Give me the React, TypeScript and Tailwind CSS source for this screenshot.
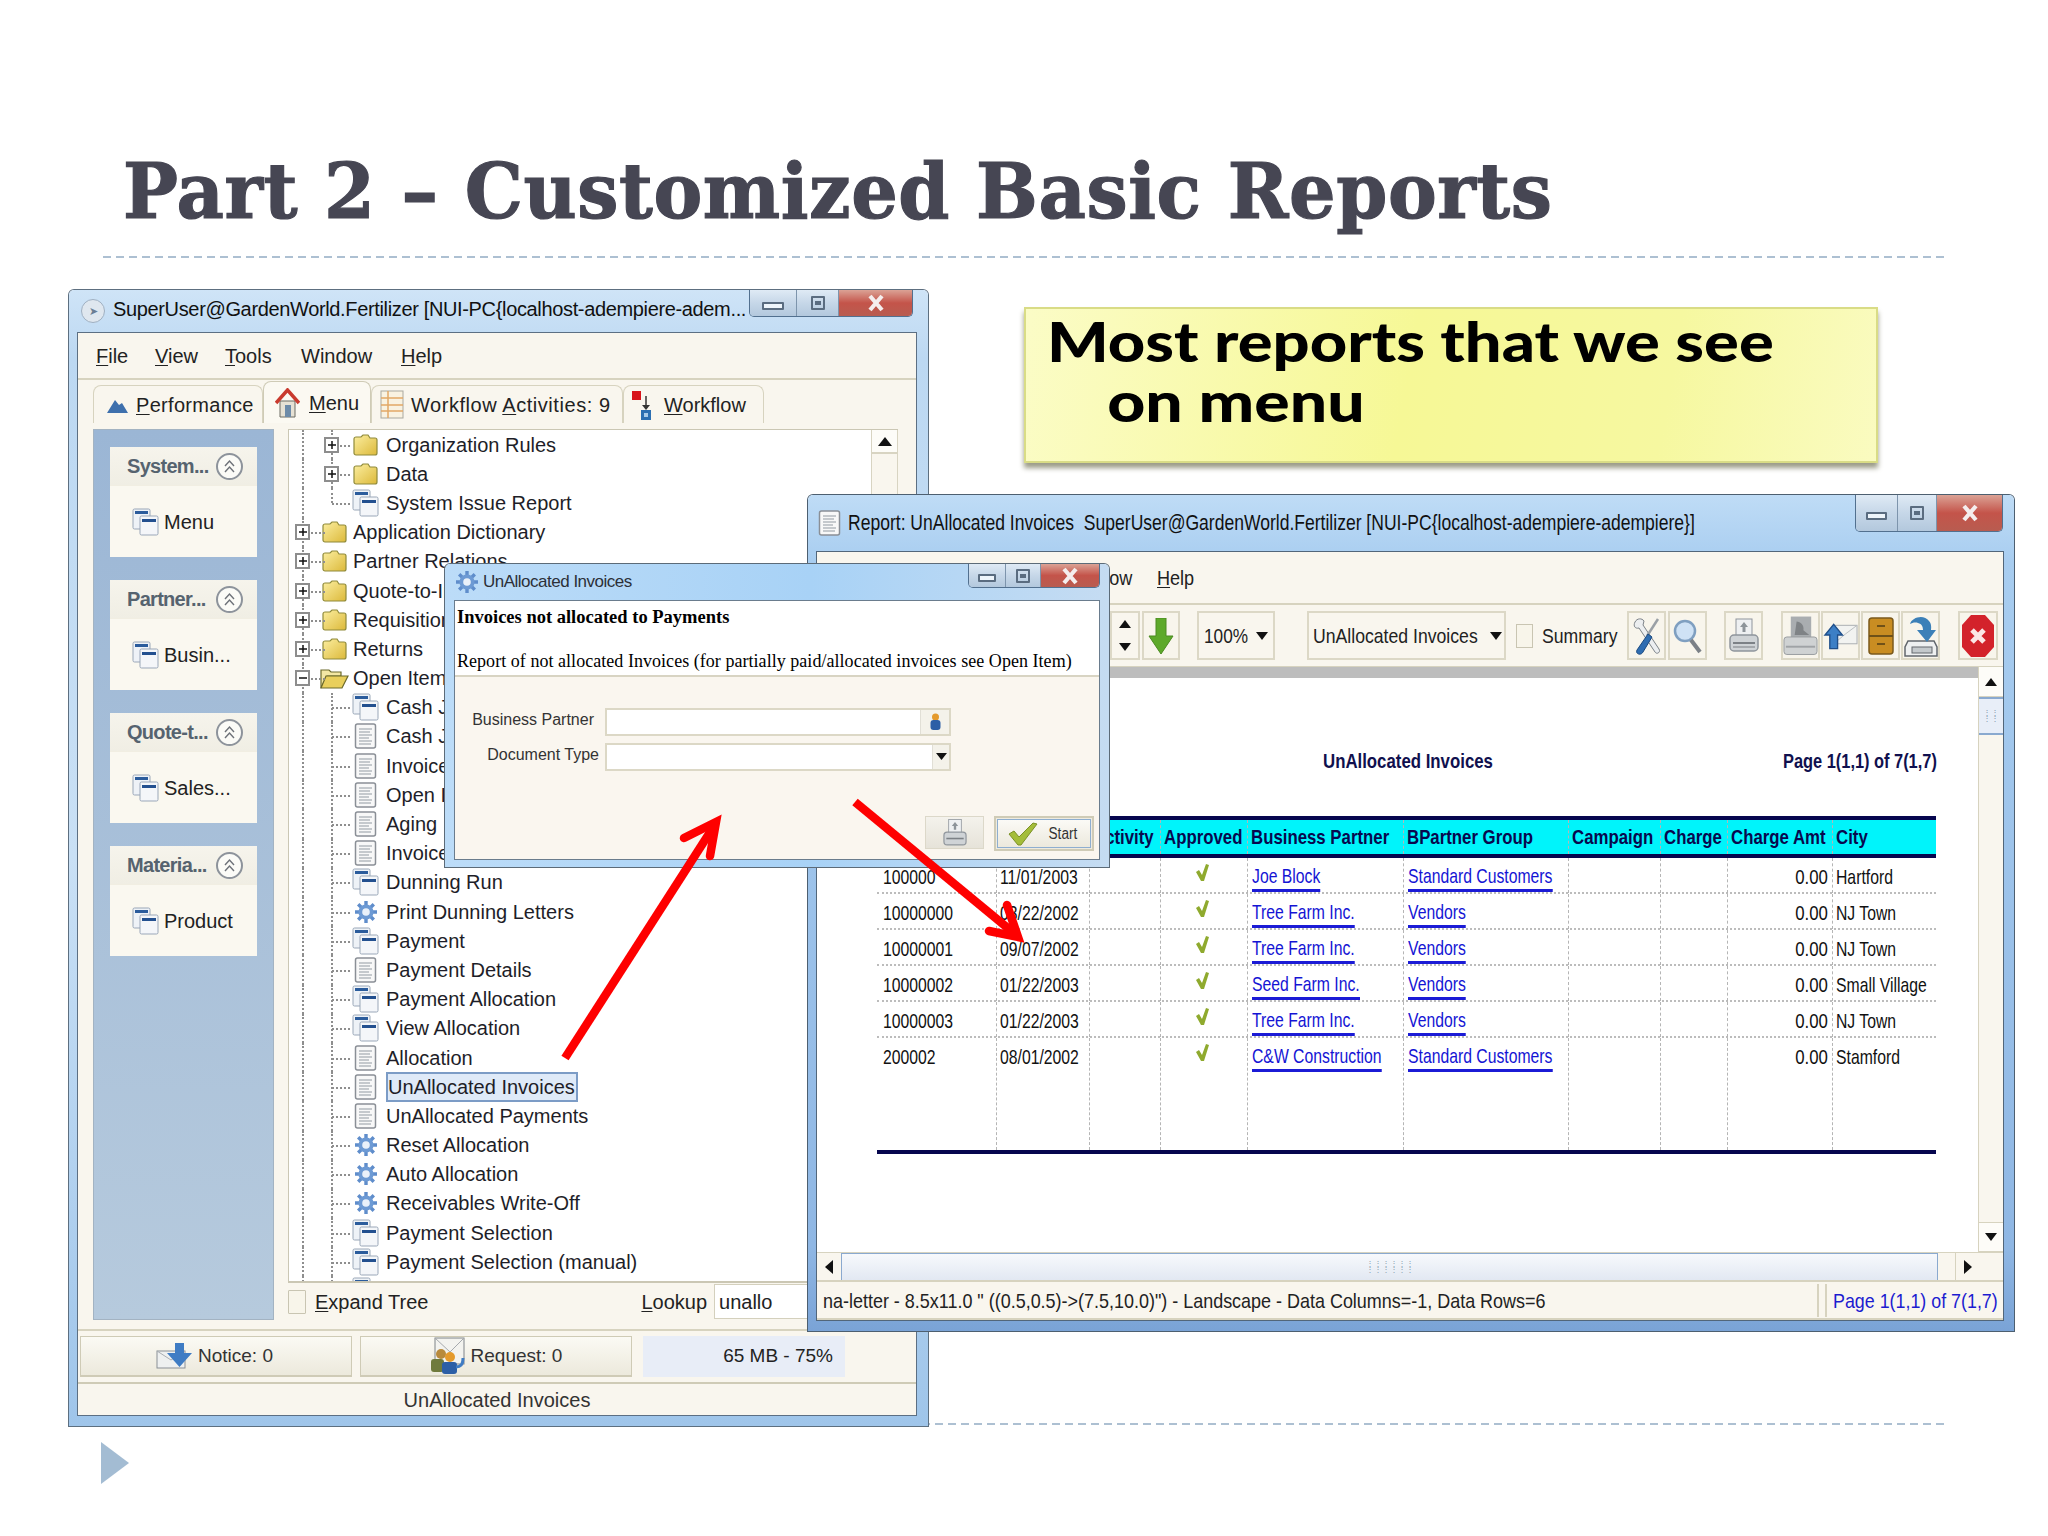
import React from "react";

const WinIcon = () => (
  <svg width="28" height="28" viewBox="0 0 28 28">
    <rect x="1" y="1" width="17" height="20" rx="1.5" fill="#eef2f7" stroke="#9aa7b8" />
    <rect x="3" y="3" width="13" height="3" fill="#2b5c9c" />
    <rect x="8" y="8" width="18" height="19" rx="1.5" fill="#f4f6f9" stroke="#9aa7b8" />
    <rect x="10" y="11" width="14" height="3" fill="#23508f" />
  </svg>
);
const ReportIcon = () => (
  <svg width="24" height="26" viewBox="0 0 24 26">
    <rect x="1.5" y="1" width="20" height="24" rx="2" fill="#f8f8f8" stroke="#8a8f96" strokeWidth="1.5" />
    <path d="M5 6h13M5 9h11M5 12h13M5 15h10M5 18h13M5 21h12" stroke="#b4b9be" strokeWidth="1.5" />
  </svg>
);
const GearIcon = () => (
  <svg width="24" height="24" viewBox="0 0 24 24">
    <g stroke="#5f8dcb" strokeWidth="3.4">
      <path d="M12 1v22M1 12h22M4.2 4.2l15.6 15.6M19.8 4.2L4.2 19.8" />
    </g>
    <circle cx="12" cy="12" r="7.6" fill="#6d9ad4" />
    <circle cx="12" cy="12" r="3.8" fill="#eaf1fa" />
  </svg>
);
const Folder = () => (
  <svg width="25" height="22" viewBox="0 0 25 22">
    <defs>
      <linearGradient id="fy" x1="0" y1="0" x2="1" y2="1">
        <stop offset="0" stopColor="#fbeea0" />
        <stop offset="1" stopColor="#dcb93a" />
      </linearGradient>
    </defs>
    <path d="M1 5a2 2 0 012-2h5l2-2h5l2 3h5a2 2 0 012 2v13a2 2 0 01-2 2H3a2 2 0 01-2-2z" fill="url(#fy)" stroke="#8f8a3a" strokeWidth="1.2" />
  </svg>
);
const OpenFolder = () => (
  <svg width="29" height="24" viewBox="0 0 29 24">
    <path d="M1 4h8l2 2h10v4H7L1 22z" fill="#f3e7a4" stroke="#6c6a2c" strokeWidth="1.2" />
    <path d="M6 10h22l-6 12H1z" fill="#e9cf5c" stroke="#6c6a2c" strokeWidth="1.2" />
  </svg>
);
const TreeBox = ({ open }: { open?: boolean }) => (
  <span className="absolute left-[6px] top-1/2 -mt-[8px] z-10 flex h-[16px] w-[15px] items-center justify-center border-2 border-[#8d8d8d] bg-white">
    <svg width="10" height="10" viewBox="0 0 10 10">
      <path d={open ? "M1 5h8" : "M1 5h8M5 1v8"} stroke="#111" strokeWidth="1.5" />
    </svg>
  </span>
);
const ChevCircle = () => (
  <span className="flex h-[27px] w-[27px] shrink-0 items-center justify-center rounded-full border-2 border-[#8d939b] bg-[#fbfbf7]">
    <svg width="15" height="15" viewBox="0 0 15 15" fill="none" stroke="#6d7178" strokeWidth="1.4">
      <path d="M3 7l4.5-5L12 7M3 13l4.5-5L12 13" />
    </svg>
  </span>
);
const WinButtons = ({ w, h, a, b, c }: { w: string; h: string; a: string; b: string; c: string }) => (
  <div className={`flex shrink-0 ${w} ${h} overflow-hidden rounded-b-[5px] border border-t-0 border-[#52708f]`}>
    <div className={`${a} flex items-center justify-center border-r border-[#7d94ac] bg-[linear-gradient(180deg,#dfeaf5,#c6d7e8_50%,#b3c8dd)]`}>
      <span className="mt-[5px] h-[8px] w-[50%] max-w-[22px] rounded-[1px] border-2 border-[#5a6c80] bg-[#eef5fb]" />
    </div>
    <div className={`${b} flex items-center justify-center border-r border-[#7d94ac] bg-[linear-gradient(180deg,#dfeaf5,#c6d7e8_50%,#b3c8dd)]`}>
      <span className="flex h-[14px] w-[14px] items-center justify-center rounded-[1px] border-2 border-[#5a6c80]">
        <span className="h-[4px] w-[6px] bg-[#5a6c80]" />
      </span>
    </div>
    <div className={`${c} flex items-center justify-center bg-[linear-gradient(180deg,#dba295,#c4544a_50%,#b85c50)]`}>
      <svg width="18" height="18" viewBox="0 0 18 18"><path d="M3 2l12 14M15 2L3 16" stroke="#f4eeee" strokeWidth="4.2" /></svg>
    </div>
  </div>
);
const U = ({ c, r }: { c: string; r: string }) => (
  <span>
    <span className="underline decoration-1 underline-offset-2">{c}</span>
    {r}
  </span>
);

type Row = { t: string; l: 0 | 1; i: "f" | "o" | "w" | "r" | "g"; box?: "p" | "m"; last?: boolean; sel?: boolean };
const rows: Row[] = [
  { t: "Organization Rules", l: 1, i: "f", box: "p" },
  { t: "Data", l: 1, i: "f", box: "p" },
  { t: "System Issue Report", l: 1, i: "w", last: true },
  { t: "Application Dictionary", l: 0, i: "f", box: "p" },
  { t: "Partner Relations", l: 0, i: "f", box: "p" },
  { t: "Quote-to-Invoice", l: 0, i: "f", box: "p" },
  { t: "Requisition-to-Invoice", l: 0, i: "f", box: "p" },
  { t: "Returns", l: 0, i: "f", box: "p" },
  { t: "Open Items", l: 0, i: "o", box: "m" },
  { t: "Cash Journal", l: 1, i: "w" },
  { t: "Cash Journal Detail", l: 1, i: "r" },
  { t: "Invoice Detail", l: 1, i: "r" },
  { t: "Open Items", l: 1, i: "r" },
  { t: "Aging", l: 1, i: "r" },
  { t: "Invoice Not Realized", l: 1, i: "r" },
  { t: "Dunning Run", l: 1, i: "w" },
  { t: "Print Dunning Letters", l: 1, i: "g" },
  { t: "Payment", l: 1, i: "w" },
  { t: "Payment Details", l: 1, i: "r" },
  { t: "Payment Allocation", l: 1, i: "w" },
  { t: "View Allocation", l: 1, i: "w" },
  { t: "Allocation", l: 1, i: "r" },
  { t: "UnAllocated Invoices", l: 1, i: "r", sel: true },
  { t: "UnAllocated Payments", l: 1, i: "r" },
  { t: "Reset Allocation", l: 1, i: "g" },
  { t: "Auto Allocation", l: 1, i: "g" },
  { t: "Receivables Write-Off", l: 1, i: "g" },
  { t: "Payment Selection", l: 1, i: "w" },
  { t: "Payment Selection (manual)", l: 1, i: "w" },
  { t: "Payment Print/Export", l: 1, i: "w" },
];

const TreeIcon = ({ i }: { i: Row["i"] }) =>
  i === "f" ? <Folder /> : i === "o" ? <OpenFolder /> : i === "w" ? <WinIcon /> : i === "r" ? <ReportIcon /> : <GearIcon />;

const VDots = ({ half }: { half?: boolean }) => (
  <span className={`absolute left-[13px] top-0 border-l-2 border-dotted border-[#8e8e8e] ${half ? "h-1/2" : "h-full"}`} />
);
const HDots = ({ w }: { w: string }) => (
  <span className={`absolute left-[14px] top-1/2 border-t-2 border-dotted border-[#8e8e8e] ${w}`} />
);

const TreeRow = ({ r }: { r: Row }) => (
  <div className="flex h-[29.2px] items-center whitespace-nowrap">
    <span className="relative h-full w-[29px] shrink-0">
      <VDots />
      {r.l === 0 && <HDots w="w-[22px]" />}
      {r.l === 0 && r.box && <TreeBox open={r.box === "m"} />}
    </span>
    {r.l === 1 && (
      <span className="relative h-full w-[32px] shrink-0 -mr-px">
        <VDots half={r.last} />
        <HDots w="w-[18px]" />
        {r.box && <TreeBox />}
      </span>
    )}
    <span className="flex w-[33px] shrink-0 justify-center">
      <TreeIcon i={r.i} />
    </span>
    <span className={`text-[20px] leading-[26px] text-[#1e1e28] ${r.l === 0 ? "ml-[2px]" : "ml-[4px]"} ${r.sel ? "border-2 border-[#7c9cc6] bg-[#dfeaf8] pr-[1px]" : ""}`}>{r.t}</span>
  </div>
);

const sideCards = [
  ["System...", "Menu"],
  ["Partner...", "Busin..."],
  ["Quote-t...", "Sales..."],
  ["Materia...", "Product"],
];

const narrow = "inline-block origin-left scale-x-[0.75] whitespace-nowrap";

const ToolBtn = ({ children, w = "w-[39px]" }: { children: React.ReactNode; w?: string }) => (
  <div className={`flex h-[49px] ${w} shrink-0 items-center justify-center border-2 border-[#dcd8c6] bg-[#f8f5ec]`}>{children}</div>
);

const Link = ({ t }: { t: string }) => (
  <span className={`${narrow} border-b-[3px] border-[#1b1bd6] pb-[1px] text-[21px] leading-[24px] text-[#1414d4]`}>{t}</span>
);

const tableCols = "grid grid-cols-[120px_93px_71px_87px_156px_165px_92px_67px_105px_102px]";
const dashR = "border-r border-dashed border-[#b5b5b5]";
const data = [
  ["100000", "11/01/2003", "Joe Block", "Standard Customers", "Hartford"],
  ["10000000", "03/22/2002", "Tree Farm Inc.", "Vendors", "NJ Town"],
  ["10000001", "09/07/2002", "Tree Farm Inc.", "Vendors", "NJ Town"],
  ["10000002", "01/22/2003", "Seed Farm Inc.", "Vendors", "Small Village"],
  ["10000003", "01/22/2003", "Tree Farm Inc.", "Vendors", "NJ Town"],
  ["200002", "08/01/2002", "C&W Construction", "Standard Customers", "Stamford"],
];
const headers = ["Document No", "Date Invoiced", "Activity", "Approved", "Business Partner", "BPartner Group", "Campaign", "Charge", "Charge Amt", "City"];

const Check = () => (
  <svg width="15" height="18" viewBox="0 0 15 18"><path d="M1 8l3-2 3 5 4-11 3 1-5 16H6z" fill="#8faa2e" /></svg>
);

const Printer = ({ c = "#8f959c" }: { c?: string }) => (
  <svg width="32" height="38" viewBox="0 0 32 38">
    <rect x="8" y="2" width="16" height="18" fill="#eef0f2" stroke={c} />
    <path d="M16 5l4 5h-2.5v5h-3v-5H12z" fill="#8d949a" />
    <rect x="2" y="18" width="28" height="16" rx="4" fill="#cfd3d6" stroke={c} strokeWidth="1.5" />
    <path d="M5 26h22" stroke="#7c8186" strokeWidth="2" />
    <path d="M5 30h22" stroke="#a5a9ad" strokeWidth="2" />
  </svg>
);

export default function App() {
  return (
    <div className="relative flex h-[1536px] w-[2048px] flex-col overflow-hidden bg-white font-['Liberation_Sans',sans-serif]">
      {/* Slide title */}
      <div className="pl-[123px] pt-[143px]">
        <h1 className="origin-left scale-x-[0.95] whitespace-nowrap font-['DejaVu_Serif',serif] text-[77px] font-bold leading-[96px] tracking-[0.6px] text-[#464653] [-webkit-text-stroke:1.2px_#464653]">
          Part 2 – Customized Basic Reports
        </h1>
      </div>
      <div className="ml-[103px] mt-[17px] h-[2px] w-[1843px] bg-[repeating-linear-gradient(90deg,#adc0d2_0,#adc0d2_8px,transparent_8px,transparent_13px)]" />
      <div className="flex-1" />
      <div className="ml-[103px] h-[2px] w-[1843px] bg-[repeating-linear-gradient(90deg,#adc0d2_0,#adc0d2_8px,transparent_8px,transparent_13px)]" />
      <svg className="ml-[101px] mt-[17px] mb-[52px]" width="28" height="42" viewBox="0 0 28 42"><path d="M0 0l28 21L0 42z" fill="#a3bcd3" /></svg>

      {/* Yellow callout */}
      <div className="absolute left-[1024px] top-[307px] h-[156px] w-[854px] border-2 border-[#d9dc86] bg-[linear-gradient(100deg,#fbfcc6,#f6f896_45%,#f6f8a0_75%,#fafbc0)] pl-[21px] pt-[2px] shadow-[0_5px_5px_#9b9b88] font-['Lato',sans-serif] text-[56px] font-black leading-[60px] text-black">
        <div className="origin-left scale-x-[1.16] whitespace-nowrap">Most reports that we see</div>
        <div className="origin-left scale-x-[1.18] whitespace-nowrap pl-[51px]">on menu</div>
      </div>

      {/* Main window */}
      <div className="absolute left-[69px] top-[290px] flex h-[1136px] w-[859px] flex-col rounded-t-[5px] bg-[linear-gradient(180deg,#cfe4f7,#bcd8f2_6%,#c9e0f5_50%,#9fc5ea)] pb-[10px] pl-[8px] pr-[11px] shadow-[0_0_0_1px_#5d6f80]">
        <div className="flex h-[42px] shrink-0 items-start">
          <div className="ml-[4px] mt-[9px] flex h-[24px] w-[24px] items-center justify-center rounded-full border border-[#9fb0c2] bg-[#dfe7ef] text-[11px] text-[#6b7f95]">➤</div>
          <div className="ml-[8px] mt-[6px] w-[636px] whitespace-nowrap text-[20px] leading-[26px] tracking-[-0.35px] text-[#111]">SuperUser@GardenWorld.Fertilizer [NUI-PC{"{"}localhost-adempiere-adem...</div>
          <WinButtons w="w-[164px]" h="h-[27px]" a="w-[47px]" b="w-[42px]" c="flex-1" />
        </div>
        <div className="flex min-h-0 flex-1 flex-col border border-[#5c6f83] bg-[#f9f6ee]">
          <div className="flex h-[47px] shrink-0 items-center border-b-2 border-[#d7d3bf] pl-[18px] text-[20px] text-[#222]">
            <span className="w-[59px]"><U c="F" r="ile" /></span>
            <span className="w-[70px]"><U c="V" r="iew" /></span>
            <span className="w-[76px]"><U c="T" r="ools" /></span>
            <span className="w-[100px]">Window</span>
            <span><U c="H" r="elp" /></span>
          </div>
          <div className="flex h-[43px] shrink-0 items-end pl-[15px] text-[20px] text-[#222]">
            <div className="flex h-[38px] w-[170px] items-center gap-[8px] rounded-t-[8px] border border-b-0 border-[#d7d3bf] pl-[13px] tracking-[0.3px]">
              <svg width="21" height="16" viewBox="0 0 21 16"><path d="M0 16L8 3l4 5 3-2 6 10z" fill="#3e70ad" /></svg>
              <U c="P" r="erformance" />
            </div>
            <div className="flex h-[42px] w-[108px] items-center gap-[9px] rounded-t-[8px] border border-b-0 border-[#cfcbb6] bg-[#fbf9f2] pl-[11px]">
              <svg width="25" height="30" viewBox="0 0 25 30"><path d="M5 13h15v16H5z" fill="#e6e1d4" stroke="#6b6a62" /><path d="M1 15L12.5 2 24 15" fill="none" stroke="#c93a2e" strokeWidth="3.5" /><rect x="10" y="17" width="6" height="12" fill="#6c8aa8" /></svg>
              <U c="M" r="enu" />
            </div>
            <div className="flex h-[38px] w-[252px] items-center gap-[7px] rounded-t-[8px] border border-b-0 border-[#d7d3bf] pl-[8px]">
              <svg width="24" height="29" viewBox="0 0 24 29"><rect x="1" y="1" width="22" height="27" fill="#f9f2e1" stroke="#a9a89f" /><path d="M1 8h22M1 15h22M1 21h22M8 1v27" stroke="#e2a866" strokeWidth="1.5" /></svg>
              <span className="tracking-[0.55px]">Workflow <U c="A" r="ctivities: 9" /></span>
            </div>
            <div className="flex h-[38px] w-[141px] items-center gap-[11px] rounded-t-[8px] border border-b-0 border-[#d7d3bf] pl-[8px]">
              <svg width="21" height="30" viewBox="0 0 21 30"><rect x="0" y="1" width="9" height="9" fill="#d8131a" /><path d="M14 6v12" stroke="#333" strokeWidth="1.5" /><path d="M10 15l4 5 4-5z" fill="#333" /><rect x="9" y="20" width="10" height="10" fill="#2c6fb2" /><rect x="12" y="23" width="4" height="4" fill="#a9cbe9" /></svg>
              <U c="W" r="orkflow" />
            </div>
          </div>
          <div className="flex min-h-0 flex-1 gap-[14px] pb-[9px] pl-[15px] pt-[6px]">
            <div className="flex w-[181px] shrink-0 flex-col gap-[23px] border border-[#a3b3c2] bg-[linear-gradient(180deg,#9bb6d5,#b6cadd)] px-[16px] pt-[17px]">
              {sideCards.map(([h, b]) => (
                <div key={h} className="h-[110px] shrink-0 bg-[#faf8f0]">
                  <div className="flex h-[39px] items-center justify-between border-b border-[#f1eee2] bg-[linear-gradient(180deg,#f6f4ec,#f0eee4)] pl-[17px] pr-[14px]">
                    <span className="text-[20px] font-bold tracking-[-0.7px] text-[#56636f]">{h}</span>
                    <ChevCircle />
                  </div>
                  <div className="flex h-[71px] items-center gap-[4px] pl-[22px] text-[20px] text-[#222]">
                    <WinIcon />
                    <span>{b}</span>
                  </div>
                </div>
              ))}
            </div>
            <div className="flex w-[610px] shrink-0 flex-col">
              <div className="relative flex h-[854px] shrink-0 overflow-hidden border-b-2 border-l border-t border-[#cbc7b4] bg-white">
                <div className="flex-1">
                  {rows.map((r, i) => (
                    <TreeRow key={i} r={r} />
                  ))}
                </div>
                <div className="w-[27px] shrink-0 border-x border-[#d8d4c2] bg-[#f9f6ee]">
                  <div className="flex h-[24px] items-center justify-center border-b-2 border-[#d8d4c2] bg-[#fdfcf8]">
                    <svg width="14" height="9" viewBox="0 0 14 9"><path d="M7 0l7 9H0z" fill="#111" /></svg>
                  </div>
                </div>
              </div>
              <div className="flex min-h-0 flex-1 items-center whitespace-nowrap text-[20px] text-[#222]">
                <span className="h-[24px] w-[18px] shrink-0 rounded-[1px] border border-[#c9c5b2] bg-[#f8f5ea]" />
                <span className="ml-[9px]"><U c="E" r="xpand Tree" /></span>
                <span className="ml-[213px]"><U c="L" r="ookup" /></span>
                <span className="ml-[7px] flex h-[35px] w-[160px] shrink-0 items-center border border-[#d4d0bd] bg-white pl-[4px]">unallo</span>
              </div>
            </div>
          </div>
          <div className="flex h-[53px] shrink-0 gap-[8px] border-t-2 border-[#d7d3bf] pl-[2px] pt-[5px] text-[19px] text-[#333]">
            <div className="flex h-[41px] w-[272px] items-center justify-center gap-[5px] border border-[#cfcbb6] border-b-2 bg-[linear-gradient(180deg,#fbfaf4,#ece9dc)] pr-[3px]">
              <svg width="37" height="26" viewBox="0 0 37 26"><rect x="1" y="8" width="28" height="17" fill="#eef0f0" stroke="#8a8f96" /><path d="M1 8l14 9 14-9" fill="none" stroke="#a9aeb3" /><path d="M19 0h9v10h8L23.5 24 11 10h8z" fill="#3f7cc4" /></svg>
              <span>Notice: 0</span>
            </div>
            <div className="flex h-[41px] w-[272px] items-center justify-center gap-[5px] border border-[#cfcbb6] border-b-2 bg-[linear-gradient(180deg,#fbfaf4,#ece9dc)]">
              <svg width="36" height="38" viewBox="0 0 36 38"><rect x="5" y="1" width="29" height="26" fill="#f3f3ef" stroke="#7e8388" /><path d="M5 1l15 14L34 1" fill="none" stroke="#a5a9ad" /><circle cx="11" cy="17" r="5" fill="#b88a3c" /><rect x="1" y="22" width="13" height="13" rx="3" fill="#6f7a3c" /><circle cx="20" cy="20" r="5" fill="#e49a2c" /><rect x="12" y="25" width="15" height="12" rx="3" fill="#2c5fa6" /><path d="M26 30c6 0 7-4 7-9" fill="none" stroke="#3f7cc4" strokeWidth="3" /></svg>
              <span>Request: 0</span>
            </div>
            <div className="ml-[3px] flex h-[41px] w-[202px] items-center justify-end bg-[#e8edf7] pr-[12px] text-[#222]">65 MB - 75%</div>
          </div>
          <div className="flex h-[33px] shrink-0 items-center justify-center border-t-2 border-[#cfcbb6] text-[20px] text-[#333]">UnAllocated Invoices</div>
        </div>
      </div>

      {/* Report window */}
      <div className="absolute left-[808px] top-[495px] flex h-[836px] w-[1206px] flex-col rounded-t-[5px] bg-[linear-gradient(180deg,#bfdcf6,#a8cdf0_8%,#8fb7e4_90%,#7aa3d6)] pb-[10px] pl-[8px] pr-[10px] shadow-[0_0_0_1px_#4d5f70]">
        <div className="flex h-[56px] shrink-0 items-start">
          <div className="ml-[2px] mt-[15px] shrink-0"><ReportIcon /></div>
          <div className="ml-[6px] mt-[15px] w-[1007px] text-[22px] leading-[26px] text-[#111]">
            <span className="inline-block origin-left scale-x-[0.797] whitespace-pre">Report: UnAllocated Invoices  SuperUser@GardenWorld.Fertilizer [NUI-PC{"{"}localhost-adempiere-adempiere{"}"}]</span>
          </div>
          <WinButtons w="w-[148px]" h="h-[37px]" a="w-[42px]" b="w-[39px]" c="flex-1" />
        </div>
        <div className="flex min-h-0 flex-1 flex-col border border-[#52667a] bg-[#f9f6ee]">
          <div className="flex h-[53px] shrink-0 items-center border-b-2 border-[#d7d3bf] pl-[20px] text-[21px] text-[#222]">
            <span className="w-[55px]"><U c="F" r="ile" /></span>
            <span className="w-[60px]"><U c="V" r="iew" /></span>
            <span className="w-[45px]"><U c="G" r="o" /></span>
            <span className="w-[67px]"><U c="T" r="ools" /></span>
            <span className="ml-[4px] w-[89px]"><span className="inline-block origin-left scale-x-[0.86]"><U c="W" r="indow" /></span></span>
            <span className="inline-block origin-left scale-x-[0.86]"><U c="H" r="elp" /></span>
          </div>
          <div className="flex h-[62px] shrink-0 items-center border-b border-[#d7d3bf] pl-[293px] text-[21px] text-[#222]">
            <div className="flex h-[49px] w-[30px] flex-col items-center justify-around border-2 border-[#dcd8c6]">
              <svg width="12" height="8" viewBox="0 0 12 8"><path d="M6 0l6 8H0z" fill="#111" /></svg>
              <svg width="12" height="8" viewBox="0 0 12 8"><path d="M6 8l6-8H0z" fill="#111" /></svg>
            </div>
            <ToolBtn w="w-[38px] ml-[2px]">
              <svg width="26" height="36" viewBox="0 0 26 36"><path d="M8 0h10v18h7L13 36 1 18h7z" fill="#5da92a" stroke="#4a8a20" /></svg>
            </ToolBtn>
            <div className="ml-[17px] flex h-[49px] w-[78px] items-center border-2 border-[#dcd8c6] pl-[5px] pr-[5px]">
              <span className="inline-block w-0 grow origin-left scale-x-[0.82] whitespace-nowrap">100%</span>
              <svg width="12" height="8" viewBox="0 0 12 8"><path d="M6 8l6-8H0z" fill="#111" /></svg>
            </div>
            <div className="ml-[32px] flex h-[49px] w-[199px] items-center border-2 border-[#dcd8c6] pl-[4px] pr-[2px]">
              <span className="inline-block w-0 grow origin-left scale-x-[0.84] whitespace-nowrap">UnAllocated Invoices</span>
              <svg width="12" height="8" viewBox="0 0 12 8"><path d="M6 8l6-8H0z" fill="#111" /></svg>
            </div>
            <span className="ml-[10px] h-[24px] w-[17px] border border-[#c9c5b2] bg-[#f8f5ea]" />
            <span className="ml-[9px] inline-block w-[85px] origin-left scale-x-[0.84] whitespace-nowrap">Summary</span>
            <ToolBtn>
              <svg width="32" height="40" viewBox="0 0 32 40"><path d="M4 6c2-4 7-4 9-1l-1 4 16 24c2 3-2 6-4 3L8 12C4 13 2 10 4 6z" fill="#eceef0" stroke="#7c8288" /><path d="M27 3L16 20" stroke="#9aa0a6" strokeWidth="2.5" /><path d="M17 18l-11 16c-2 4 4 6 6 2l9-15z" fill="#2f6db1" stroke="#1c4a80" /></svg>
            </ToolBtn>
            <ToolBtn w="w-[39px] ml-[2px]">
              <svg width="32" height="40" viewBox="0 0 32 40"><circle cx="13" cy="15" r="10" fill="#cfe2f5" stroke="#7f9fc0" strokeWidth="2.5" /><path d="M19 24l9 12" stroke="#7b8086" strokeWidth="4" /></svg>
            </ToolBtn>
            <ToolBtn w="w-[39px] ml-[17px]"><Printer /></ToolBtn>
            <ToolBtn w="w-[39px] ml-[18px]">
              <svg width="36" height="42" viewBox="0 0 36 42"><rect x="8" y="1" width="21" height="22" fill="#a9adb0" /><path d="M14 6c4 0 8 4 7 9l6 5H12z" fill="#7f8386" /><rect x="1" y="22" width="34" height="18" rx="3" fill="#cfd2d3" stroke="#989c9f" /><path d="M3 32h30" stroke="#9fa3a6" strokeWidth="2" /></svg>
            </ToolBtn>
            <ToolBtn w="w-[39px] ml-[1px]">
              <svg width="36" height="32" viewBox="0 0 36 32"><rect x="11" y="5" width="24" height="19" fill="#f2f3f1" stroke="#a9aeb1" /><path d="M11 24l12-10L35 5" fill="none" stroke="#b9bdc0" /><path d="M11 4l9 11h-5v14H7V15H2z" fill="#3c7fc6" stroke="#1f4f8a" strokeWidth="1.4" /></svg>
            </ToolBtn>
            <ToolBtn w="w-[39px] ml-[1px]">
              <svg width="26" height="38" viewBox="0 0 26 38"><rect x="1" y="1" width="24" height="36" rx="3" fill="#c98d22" stroke="#7b5a1c" strokeWidth="1.5" /><path d="M1 19h24" stroke="#6f5118" strokeWidth="2" /><path d="M9 9h8M9 27h8" stroke="#6f5118" strokeWidth="2" /></svg>
            </ToolBtn>
            <ToolBtn w="w-[39px] ml-[1px]">
              <svg width="34" height="42" viewBox="0 0 34 42"><path d="M4 26h26l3 6v9H1v-9z" fill="#eef0f1" stroke="#62676d" strokeWidth="1.5" /><rect x="8" y="32" width="20" height="6" fill="#c4c9cc" stroke="#62676d" /><path d="M6 9c2-7 14-10 19-3 3 3 2 8 2 9h5l-9 12-10-12h6c0-3-1-6-5-7-3-1-6 0-8 1z" fill="#3c80b8" /></svg>
            </ToolBtn>
            <ToolBtn w="w-[40px] ml-[18px]">
              <svg width="34" height="44" viewBox="0 0 34 44"><path d="M10 1h14l9 10v22l-9 10H10L1 33V11z" fill="#d3222b" /><path d="M11 16l12 12M23 16L11 28" stroke="#fbe6e6" strokeWidth="5" /></svg>
            </ToolBtn>
          </div>
          <div className="flex min-h-0 flex-1">
            <div className="flex-1 border-t-[11px] border-[#bdbdbd] bg-white pl-[60px]">
              <div className="flex h-[138px] w-[1059px] items-center justify-between pl-[446px] text-[21px] font-bold text-[#10104e]">
                <span className="mt-[27px] inline-block w-[170px]"><span className="inline-block origin-left scale-x-[0.8] whitespace-nowrap">UnAllocated Invoices</span></span>
                <span className="mt-[27px] inline-block w-[153px]"><span className="inline-block origin-left scale-x-[0.78] whitespace-nowrap">Page 1(1,1) of 7(1,7)</span></span>
              </div>
              <div className="w-[1059px] border-b-4 border-[#06064e]">
                <div className={`${tableCols} h-[42px] border-y-4 border-[#06064e] bg-[#00f4fb] text-[21px] font-bold text-[#08084e]`}>
                  {headers.map((h) => (
                    <div key={h} className={`flex items-center overflow-hidden pl-[3px] ${dashR} last:border-r-0`}>
                      <span className="inline-block origin-left scale-x-[0.8] whitespace-nowrap">{h}</span>
                    </div>
                  ))}
                </div>
                {data.map((d, i) => (
                  <div key={i} className={`${tableCols} ${i === 5 ? "h-[112px]" : "h-[36px] border-b-2 border-dotted border-[#bcbcbc]"} text-[21px] text-[#111]`}>
                    <div className={`flex h-full items-start pl-[6px] ${dashR}`}><span className={`${narrow} mt-[3px]`}>{d[0]}</span></div>
                    <div className={`flex h-full items-start pl-[3px] ${dashR}`}><span className={`${narrow} mt-[3px]`}>{d[1]}</span></div>
                    <div className={`h-full ${dashR}`} />
                    <div className={`flex h-full items-start justify-center pr-[4px] pt-[6px] ${dashR}`}><Check /></div>
                    <div className={`flex h-full items-start pl-[4px] pt-[6px] ${dashR}`}><Link t={d[2]} /></div>
                    <div className={`flex h-full items-start pl-[4px] pt-[6px] ${dashR}`}><Link t={d[3]} /></div>
                    <div className={`h-full ${dashR}`} />
                    <div className={`h-full ${dashR}`} />
                    <div className={`flex h-full items-start justify-end pr-[4px] ${dashR}`}><span className="mt-[3px] inline-block origin-right scale-x-[0.8]">0.00</span></div>
                    <div className="flex h-full items-start pl-[3px]"><span className={`${narrow} mt-[3px]`}>{d[4]}</span></div>
                  </div>
                ))}
              </div>
            </div>
            <div className="flex w-[25px] shrink-0 flex-col border-l border-[#d7d3bf] bg-[#f9f6ee]">
              <div className="flex h-[30px] items-center justify-center border-b border-[#d7d3bf] bg-[#fdfcf8]">
                <svg width="12" height="8" viewBox="0 0 12 8"><path d="M6 0l6 8H0z" fill="#111" /></svg>
              </div>
              <div className="flex h-[38px] items-center justify-center border-y-2 border-[#8aa9cf] bg-[#e8eef8] text-[8px] leading-[6px] text-[#7f93ad]">⋮⋮<br />⋮⋮</div>
              <div className="flex-1" />
              <div className="flex h-[30px] items-center justify-center border-y border-[#d7d3bf] bg-[#fdfcf8]">
                <svg width="12" height="8" viewBox="0 0 12 8"><path d="M6 8l6-8H0z" fill="#111" /></svg>
              </div>
            </div>
          </div>
          <div className="flex h-[28px] shrink-0 border-t border-[#d7d3bf]">
            <div className="flex w-[24px] items-center justify-center">
              <svg width="8" height="14" viewBox="0 0 8 14"><path d="M0 7l8-7v14z" fill="#111" /></svg>
            </div>
            <div className="flex w-[1097px] items-center justify-center border-x border-t border-[#8aa9cf] bg-[linear-gradient(180deg,#f7f9fc,#e2e8f2)] text-[8px] leading-[6px] text-[#8c9cb1]">⋮⋮⋮⋮⋮⋮<br />⋮⋮⋮⋮⋮⋮</div>
            <div className="w-[17px]" />
            <div className="flex w-[25px] items-center justify-center border-l border-[#d7d3bf]">
              <svg width="8" height="14" viewBox="0 0 8 14"><path d="M8 7L0 0v14z" fill="#111" /></svg>
            </div>
          </div>
          <div className="flex h-[40px] shrink-0 gap-[6px] border-y-2 border-[#d7d3bf] pt-[2px] text-[21px] text-[#222]">
            <div className="flex h-[33px] w-[1002px] shrink-0 items-center border-r-2 border-[#d7d3bf] pl-[6px]">
              <span className="inline-block origin-left scale-x-[0.855] whitespace-nowrap">na-letter - 8.5x11.0 " ((0.5,0.5)-&gt;(7.5,10.0)") - Landscape - Data Columns=-1, Data Rows=6</span>
            </div>
            <div className="flex h-[33px] w-0 flex-1 items-center border-l-2 border-[#d7d3bf] pl-[6px] text-[#1c1cd0]">
              <span className="inline-block origin-left scale-x-[0.85] whitespace-nowrap">Page 1(1,1) of 7(1,7)</span>
            </div>
          </div>
        </div>
      </div>

      {/* Parameter dialog */}
      <div className="absolute left-[445px] top-[564px] flex h-[303px] w-[664px] flex-col rounded-t-[5px] bg-[linear-gradient(90deg,#bcdcf8,#a8d2f6_55%,#c5dcf2)] px-[9px] pb-[7px] shadow-[0_0_0_1px_#5c6b78]">
        <div className="flex h-[36px] shrink-0 items-start">
          <div className="ml-[1px] mt-[6px]"><GearIcon /></div>
          <div className="ml-[4px] mt-[6px] w-[489px] text-[17px] leading-[24px] tracking-[-0.5px] text-[#2c3038]">UnAllocated Invoices</div>
          <WinButtons w="w-[132px]" h="h-[24px]" a="w-[37px]" b="w-[35px]" c="flex-1" />
        </div>
        <div className="flex flex-1 flex-col border border-[#6a7c8d] bg-[#faf6ef]">
          <div className="h-[76px] shrink-0 border-b-2 border-[#d8d4c3] bg-white pl-[2px] font-['Liberation_Serif',serif] text-black">
            <div className="mt-[4px] text-[18.5px] font-bold leading-[24px]">Invoices not allocated to Payments</div>
            <div className="mt-[20px] whitespace-nowrap text-[18px] leading-[24px] tracking-[0.04px]">Report of not allocated Invoices (for partially paid/allocated invoices see Open Item)</div>
          </div>
          <div className="flex h-[94px] shrink-0 flex-col gap-[8px] pt-[31px]">
            <div className="flex h-[27px] items-center">
              <span className="w-[139px] pb-[4px] text-right text-[16px] text-[#333]">Business Partner</span>
              <div className="ml-[11px] flex h-[28px] w-[346px] justify-end border-2 border-[#dcd8c6] bg-white">
                <span className="flex w-[29px] items-center justify-center border-l border-[#e1dfd6] bg-[#f4f2ea]">
                  <svg width="11" height="17" viewBox="0 0 11 17"><circle cx="5.5" cy="4" r="3.5" fill="#e49a2c" /><rect x="0.5" y="7" width="10" height="10" rx="3" fill="#2c5fa6" /></svg>
                </span>
              </div>
            </div>
            <div className="flex h-[27px] items-center">
              <span className="w-[144px] pb-[4px] text-right text-[16px] text-[#333]">Document Type</span>
              <div className="ml-[6px] flex h-[28px] w-[346px] justify-end border-2 border-[#dcd8c6] bg-white">
                <span className="flex w-[17px] items-center justify-center border-l border-[#e1dfd6] bg-[#f4f2ea]">
                  <svg width="11" height="7" viewBox="0 0 11 7"><path d="M5.5 7L11 0H0z" fill="#111" /></svg>
                </span>
              </div>
            </div>
          </div>
          <div className="flex flex-1 items-start justify-end gap-[10px] pr-[5px] pt-[45px]">
            <div className="flex h-[33px] w-[59px] items-center justify-center border border-[#dcd8c9] bg-[linear-gradient(180deg,#f4f2ec,#e6e3d9)]">
              <svg width="28" height="30" viewBox="0 0 32 38"><rect x="8" y="2" width="16" height="18" fill="#eef0f2" stroke="#8f959c" /><path d="M16 5l4 5h-2.5v5h-3v-5H12z" fill="#8d949a" /><rect x="2" y="18" width="28" height="16" rx="4" fill="#cfd3d6" stroke="#8f959c" strokeWidth="1.5" /><path d="M5 26h22" stroke="#7c8186" strokeWidth="2" /></svg>
            </div>
            <div className="h-[35px] w-[100px] border-2 border-[#cfcbb6] bg-[#eeebdf] p-[1px]">
              <div className="flex h-full items-center justify-center gap-[8px] border border-[#8eaed0] bg-[linear-gradient(180deg,#fbfaf6,#ece9dd)] text-[16px] text-[#333]">
                <svg width="30" height="24" viewBox="0 0 30 24"><path d="M1 12l5-3 5 6L25 1l4 1-16 21h-3z" fill="#a4bd3a" stroke="#7c9126" /></svg>
                <span className="inline-block scale-x-[0.85]">Start</span>
              </div>
            </div>
          </div>
        </div>
      </div>

      {/* Red annotation arrows */}
      <svg className="pointer-events-none absolute left-0 top-0" width="2048" height="1536" viewBox="0 0 2048 1536" fill="none" stroke="#fe0000" strokeWidth="8.5">
        <path d="M565 1058L714 826" />
        <path d="M684 838L716 822L710 856" strokeLinecap="round" strokeLinejoin="miter" />
        <path d="M855 802L1015 934" />
        <path d="M989 931L1018 937L1007 905" strokeLinecap="round" strokeLinejoin="miter" />
      </svg>
    </div>
  );
}
